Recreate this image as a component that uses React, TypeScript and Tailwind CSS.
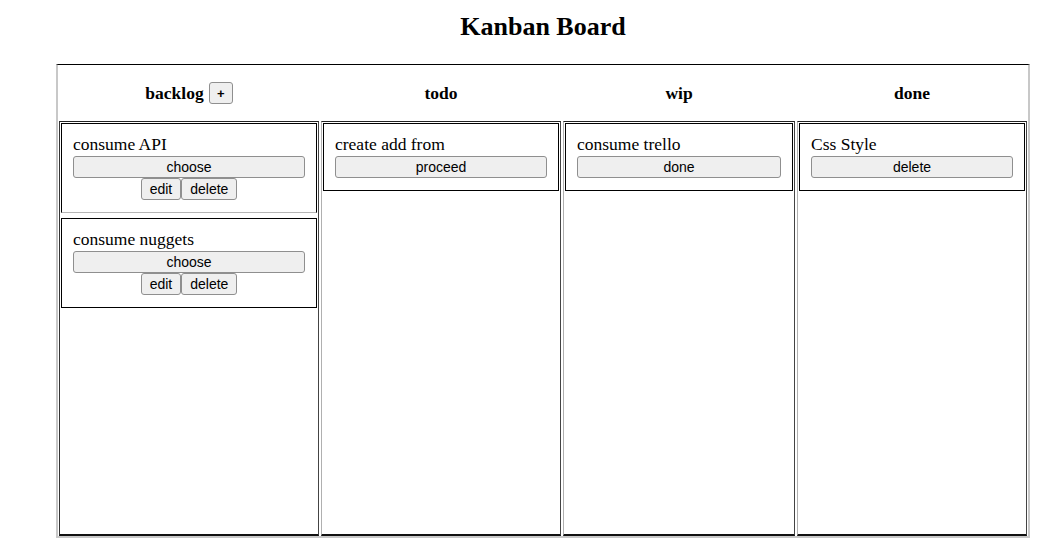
import React from 'react';

type Card = { title: string; actions: string[]; extra?: string[]; softBottom?: boolean };

const columns: { name: string; width: string; add?: boolean; cards: Card[] }[] = [
  {
    name: 'backlog',
    width: 'w-[260px]',
    add: true,
    cards: [
      { title: 'consume API', actions: ['choose'], extra: ['edit', 'delete'], softBottom: true },
      { title: 'consume nuggets', actions: ['choose'], extra: ['edit', 'delete'] },
    ],
  },
  { name: 'todo', width: 'w-[240px]', cards: [{ title: 'create add from', actions: ['proceed'] }] },
  { name: 'wip', width: 'w-[232px]', cards: [{ title: 'consume trello', actions: ['done'] }] },
  { name: 'done', width: 'w-[230px]', cards: [{ title: 'Css Style', actions: ['delete'] }] },
];

const serif = "font-['Liberation_Serif','Times_New_Roman',serif]";
const sans = "font-['Liberation_Sans',Arial,sans-serif]";

function Btn({ label, full }: { label: string; full?: boolean }) {
  return (
    <button
      className={`${sans} ${full ? 'w-full' : ''} h-[22px] px-[8px] text-[14px] leading-none text-black bg-[#efefef] border border-[#8f8f8f] rounded-[3px]`}
    >
      {label}
    </button>
  );
}

function TaskCard({ card }: { card: Card }) {
  return (
    <div
      className={`border border-black ${card.softBottom ? 'border-b-[#b5b5b5]' : ''} px-[11px] pt-[11px] pb-[12px] mb-[5px]`}
    >
      <div className={`${serif} text-[17.5px] leading-[19px] text-black`}>{card.title}</div>
      {card.actions.map((a) => (
        <Btn key={a} label={a} full />
      ))}
      {card.extra && (
        <div className="flex justify-center">
          {card.extra.map((a) => (
            <Btn key={a} label={a} />
          ))}
        </div>
      )}
    </div>
  );
}

export default function App() {
  return (
    <div className="min-h-[546px] bg-white">
      <div className="ml-[56px] w-[974px]">
        <h1 className={`${serif} text-center font-bold text-[26px] leading-[30px] pt-[12px] text-black`}>
          Kanban Board
        </h1>
        <div className="mt-[22px] border-t border-t-black border-l-2 border-l-[#c8c8c8] border-r-2 border-r-[#c8c8c8] border-b-2 border-b-[#c8c8c8] pl-px">
          <div className="flex gap-[2px] h-[56px] items-center">
            {columns.map((c) => (
              <div key={c.name} className={`${c.width} flex justify-center items-center`}>
                <span className={`${serif} font-bold text-[17.5px] text-black`}>{c.name}</span>
                {c.add && (
                  <button
                    className={`${sans} ml-[5px] w-[24px] h-[22px] text-[13px] font-bold leading-none bg-[#efefef] border border-[#8f8f8f] rounded-[3px]`}
                  >
                    +
                  </button>
                )}
              </div>
            ))}
          </div>
          <div className="flex gap-[2px] h-[415px]">
            {columns.map((c, i) => (
              <div
                key={c.name}
                className={`${c.width} border ${i === 0 ? 'border-l-[#333]' : 'border-l-[#b0b0b0]'} border-t-[#222] border-r-[#444] border-b-2 border-b-[#111] p-px`}
              >
                {c.cards.map((card) => (
                  <TaskCard key={card.title} card={card} />
                ))}
              </div>
            ))}
          </div>
        </div>
      </div>
    </div>
  );
}
